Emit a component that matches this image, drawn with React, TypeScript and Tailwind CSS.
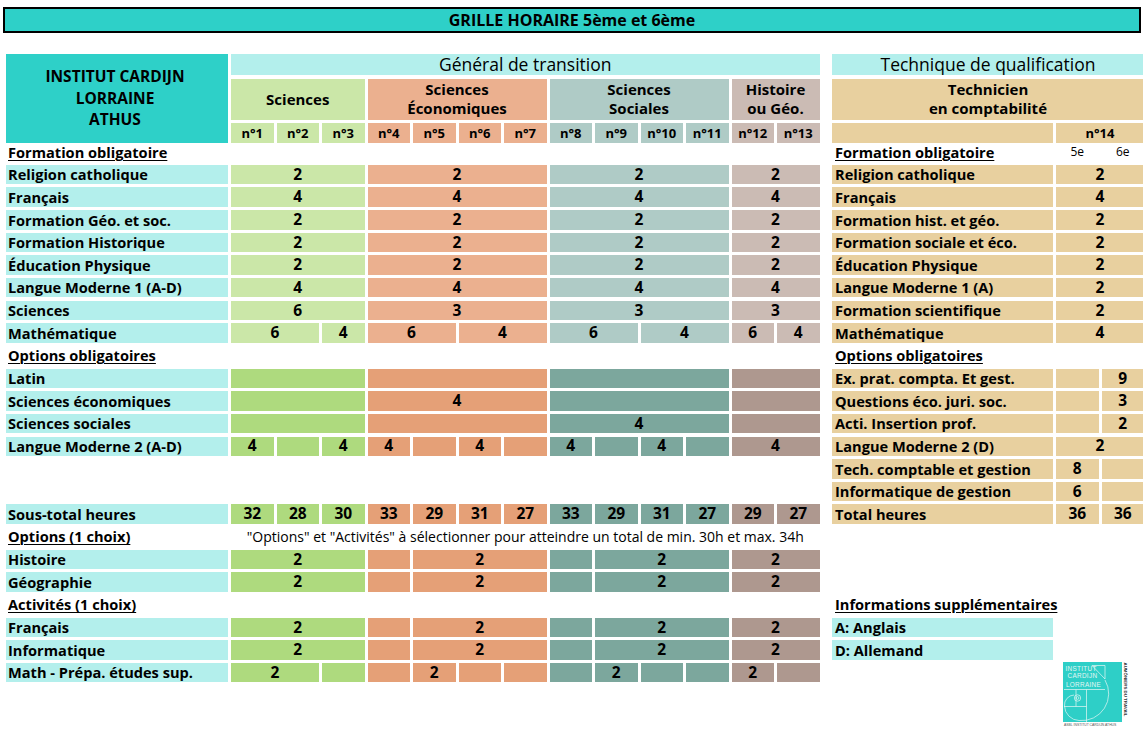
import React from "react";

const GRID =
  "grid grid-cols-[222px_repeat(13,42.5px)_6.5px_221px_repeat(2,42.5px)] gap-x-[3px]";

const SPAN: Record<number, string> = {
  1: "col-span-1",
  2: "col-span-2",
  3: "col-span-3",
  4: "col-span-4",
};

const gL = "bg-[#cbe7a8]";
const pL = "bg-[#ebb08f]";
const tL = "bg-[#afcbc6]";
const mL = "bg-[#cbbbb4]";
const gD = "bg-[#aeda7e]";
const pD = "bg-[#e5a077]";
const tD = "bg-[#7ca79d]";
const mD = "bg-[#ae988f]";
const TAN = "bg-[#e8d09f]";
const CYAN = "bg-[#b3efec]";

type Seg = [number, string];
type Group = { c: string; segs: Seg[] };
const G = (c: string, ...segs: Seg[]): Group => ({ c, segs });

const same = (v: string, deep = false): Group[] => [
  G(deep ? gD : gL, [3, v]),
  G(deep ? pD : pL, [4, v]),
  G(deep ? tD : tL, [4, v]),
  G(deep ? mD : mL, [2, v]),
];

const optPattern = (): Group[] => [
  G(gD, [3, "2"]),
  G(pD, [1, ""], [3, "2"]),
  G(tD, [1, ""], [3, "2"]),
  G(mD, [2, "2"]),
];

type RowDef = {
  label?: string;
  kind?: "cyan" | "section";
  groups?: Group[];
  note?: string;
  rlabel?: string;
  rkind?: "tan" | "section" | "cyan";
  rcells?: Seg[];
  logo?: boolean;
};

const rows: RowDef[] = [
  { label: "Religion catholique", groups: same("2"), rlabel: "Religion catholique", rcells: [[2, "2"]] },
  { label: "Français", groups: same("4"), rlabel: "Français", rcells: [[2, "4"]] },
  { label: "Formation Géo. et soc.", groups: same("2"), rlabel: "Formation hist. et géo.", rcells: [[2, "2"]] },
  { label: "Formation Historique", groups: same("2"), rlabel: "Formation sociale et éco.", rcells: [[2, "2"]] },
  { label: "Éducation Physique", groups: same("2"), rlabel: "Éducation Physique", rcells: [[2, "2"]] },
  { label: "Langue Moderne 1 (A-D)", groups: same("4"), rlabel: "Langue Moderne 1 (A)", rcells: [[2, "2"]] },
  {
    label: "Sciences",
    groups: [G(gL, [3, "6"]), G(pL, [4, "3"]), G(tL, [4, "3"]), G(mL, [2, "3"])],
    rlabel: "Formation scientifique",
    rcells: [[2, "2"]],
  },
  {
    label: "Mathématique",
    groups: [
      G(gL, [2, "6"], [1, "4"]),
      G(pL, [2, "6"], [2, "4"]),
      G(tL, [2, "6"], [2, "4"]),
      G(mL, [1, "6"], [1, "4"]),
    ],
    rlabel: "Mathématique",
    rcells: [[2, "4"]],
  },
  { label: "Options obligatoires", kind: "section", rlabel: "Options obligatoires", rkind: "section" },
  {
    label: "Latin",
    groups: same("", true),
    rlabel: "Ex. prat. compta. Et gest.",
    rcells: [
      [1, ""],
      [1, "9"],
    ],
  },
  {
    label: "Sciences économiques",
    groups: [G(gD, [3, ""]), G(pD, [4, "4"]), G(tD, [4, ""]), G(mD, [2, ""])],
    rlabel: "Questions éco. juri. soc.",
    rcells: [
      [1, ""],
      [1, "3"],
    ],
  },
  {
    label: "Sciences sociales",
    groups: [G(gD, [3, ""]), G(pD, [4, ""]), G(tD, [4, "4"]), G(mD, [2, ""])],
    rlabel: "Acti. Insertion prof.",
    rcells: [
      [1, ""],
      [1, "2"],
    ],
  },
  {
    label: "Langue Moderne 2 (A-D)",
    groups: [
      G(gD, [1, "4"], [1, ""], [1, "4"]),
      G(pD, [1, "4"], [1, ""], [1, "4"], [1, ""]),
      G(tD, [1, "4"], [1, ""], [1, "4"], [1, ""]),
      G(mD, [2, "4"]),
    ],
    rlabel: "Langue Moderne 2 (D)",
    rcells: [[2, "2"]],
  },
  {
    rlabel: "Tech. comptable et gestion",
    rcells: [
      [1, "8"],
      [1, ""],
    ],
  },
  {
    rlabel: "Informatique de gestion",
    rcells: [
      [1, "6"],
      [1, ""],
    ],
  },
  {
    label: "Sous-total heures",
    groups: [
      G(gD, [1, "32"], [1, "28"], [1, "30"]),
      G(pD, [1, "33"], [1, "29"], [1, "31"], [1, "27"]),
      G(tD, [1, "33"], [1, "29"], [1, "31"], [1, "27"]),
      G(mD, [1, "29"], [1, "27"]),
    ],
    rlabel: "Total heures",
    rcells: [
      [1, "36"],
      [1, "36"],
    ],
  },
  {
    label: "Options (1 choix)",
    kind: "section",
    note: "\"Options\" et \"Activités\" à sélectionner pour atteindre un total de min. 30h et max. 34h",
  },
  { label: "Histoire", groups: optPattern() },
  { label: "Géographie", groups: optPattern() },
  {
    label: "Activités (1 choix)",
    kind: "section",
    rlabel: "Informations supplémentaires",
    rkind: "section",
  },
  { label: "Français", groups: optPattern(), rlabel: "A: Anglais", rkind: "cyan" },
  { label: "Informatique", groups: optPattern(), rlabel: "D: Allemand", rkind: "cyan" },
  {
    label: "Math - Prépa. études sup.",
    groups: [
      G(gD, [2, "2"], [1, ""]),
      G(pD, [1, ""], [1, "2"], [1, ""], [1, ""]),
      G(tD, [1, ""], [1, "2"], [1, ""], [1, ""]),
      G(mD, [1, "2"], [1, ""]),
    ],
    logo: true,
  },
];

function Logo() {
  return (
    <svg width="66" height="65" viewBox="0 0 66 65" fontWeight="normal">
      <rect x="0" y="0" width="59" height="60" fill="#2ecfc7" />
      <g fill="none" stroke="#e6f7f5" strokeWidth="0.7">
        <path d="M29 3.5 H42 V17 Z" />
        <path d="M42 18 A 27 27 0 0 1 16 58.5" />
        <path d="M16 58.5 A 15 15 0 0 1 1.5 44" />
        <path d="M1.5 44 A 10 10 0 0 1 11 33" />
        <line x1="1" y1="27.5" x2="42" y2="27.5" />
        <line x1="23.5" y1="27.5" x2="23.5" y2="60" />
        <line x1="1" y1="44.5" x2="23.5" y2="44.5" />
        <line x1="13" y1="27.5" x2="13" y2="44.5" />
        <circle cx="14.5" cy="36" r="3.2" />
        <circle cx="14.5" cy="36" r="1.4" />
      </g>
      <g
        fontFamily="'Liberation Sans', Arial, sans-serif"
        fill="#e3f6f4"
        fontSize="6.4"
        fontWeight="normal"
        letterSpacing="0.3"
      >
        <text x="2.5" y="8.5">INSTITUT</text>
        <text x="4.5" y="16">CARDIJN</text>
        <text x="3" y="24.5">LORRAINE</text>
      </g>
      <text
        transform="translate(61,0.5) rotate(90)"
        fontFamily="'Liberation Sans', Arial, sans-serif"
        fontSize="4.4"
        fontWeight="bold"
        fill="#333"
      >
        AUMÔNIERS DU TRAVAIL
      </text>
      <text
        x="1"
        y="64"
        fontFamily="'Liberation Sans', Arial, sans-serif"
        fontSize="3.4"
        fontWeight="normal"
        fill="#555"
      >
        ASBL INSTITUT CARDIJN ATHUS
      </text>
    </svg>
  );
}

function Row({ r }: { r: RowDef }) {
  const labelCls =
    r.kind === "section"
      ? "col-start-1 pl-[2px] flex items-center whitespace-nowrap text-[14.6px] underline decoration-1 underline-offset-[2px]"
      : r.label
      ? `col-start-1 pl-[2px] flex items-center whitespace-nowrap text-[14.6px] ${CYAN}`
      : "col-start-1";
  const rlabelCls =
    r.rkind === "section"
      ? "col-start-16 pl-[3px] flex items-center whitespace-nowrap text-[14.6px] underline decoration-1 underline-offset-[2px]"
      : r.rkind === "cyan"
      ? `col-start-16 pl-[3px] flex items-center whitespace-nowrap text-[14.6px] ${CYAN}`
      : `col-start-16 pl-[3px] flex items-center whitespace-nowrap text-[14.6px] ${TAN}`;
  return (
    <div className={`${GRID} h-[19.4px] grid-rows-[19.4px]`}>
      <div className={labelCls}>{r.label ?? ""}</div>
      {r.groups &&
        r.groups.flatMap((g, gi) =>
          g.segs.map(([s, t], i) => (
            <div
              key={`${gi}-${i}`}
              className={`${SPAN[s]} ${g.c} flex items-center justify-center text-[15.5px]`}
            >
              {t}
            </div>
          ))
        )}
      {r.note && (
        <div className="col-start-2 col-span-13 flex items-center justify-center font-normal text-[14px] whitespace-nowrap">
          {r.note}
        </div>
      )}
      {r.rlabel && <div className={rlabelCls}>{r.rlabel}</div>}
      {r.rcells &&
        r.rcells.map(([s, t], i) => (
          <div key={i} className={`${SPAN[s]} ${TAN} flex items-center justify-center text-[15.5px]`}>
            {t}
          </div>
        ))}
      {r.logo && (
        <div className="col-start-17 col-span-2 self-start mt-[-1px] ml-[7px] h-[19.4px] overflow-visible">
          <Logo />
        </div>
      )}
    </div>
  );
}

export default function App() {
  return (
    <div className="w-[1143px] h-[732px] bg-white text-black font-['Open_Sans',sans-serif] font-bold text-[15px] leading-none overflow-hidden pt-[7px]">
      <div className="ml-[3px] w-[1138px] h-[26px] border-2 border-black bg-[#2ed0c8] flex items-center justify-center text-[16px]">
        GRILLE HORAIRE 5ème et 6ème
      </div>

      <div className="pl-[6px] mt-[21px]">
        {/* header */}
        <div className={`${GRID} grid-rows-[21px_41px_20px] gap-y-[3.6px]`}>
          <div className="col-start-1 row-start-1 row-span-3 bg-[#2ed0c8] flex flex-col items-center justify-center text-[15.5px] leading-[21.5px] pr-[4px]">
            <div>INSTITUT CARDIJN</div>
            <div>LORRAINE</div>
            <div>ATHUS</div>
          </div>
          <div className={`col-start-2 col-span-13 row-start-1 ${CYAN} flex items-center justify-center font-normal text-[17.5px]`}>
            Général de transition
          </div>
          <div className={`col-start-16 col-span-3 row-start-1 ${CYAN} flex items-center justify-center font-normal text-[17.5px]`}>
            Technique de qualification
          </div>

          <div className={`col-start-2 col-span-3 row-start-2 ${gL} flex items-center justify-center`}>
            Sciences
          </div>
          <div className={`col-span-4 row-start-2 ${pL} flex flex-col items-center justify-center leading-[19px]`}>
            <div>Sciences</div>
            <div>Économiques</div>
          </div>
          <div className={`col-span-4 row-start-2 ${tL} flex flex-col items-center justify-center leading-[19px]`}>
            <div>Sciences</div>
            <div>Sociales</div>
          </div>
          <div className={`col-span-2 row-start-2 ${mL} flex flex-col items-center justify-center leading-[19px]`}>
            <div>Histoire</div>
            <div>ou Géo.</div>
          </div>
          <div className={`col-start-16 col-span-3 row-start-2 ${TAN} flex flex-col items-center justify-center leading-[19px]`}>
            <div>Technicien</div>
            <div>en comptabilité</div>
          </div>

          {[
            [gL, "n°1"],
            [gL, "n°2"],
            [gL, "n°3"],
            [pL, "n°4"],
            [pL, "n°5"],
            [pL, "n°6"],
            [pL, "n°7"],
            [tL, "n°8"],
            [tL, "n°9"],
            [tL, "n°10"],
            [tL, "n°11"],
            [mL, "n°12"],
            [mL, "n°13"],
          ].map(([c, t], i) => (
            <div key={t} className={`${i === 0 ? "col-start-2" : ""} row-start-3 ${c} flex items-center justify-center text-[13px]`}>
              {t}
            </div>
          ))}
          <div className={`col-start-16 row-start-3 ${TAN}`} />
          <div className={`col-span-2 row-start-3 ${TAN} flex items-center justify-center text-[13px]`}>n°14</div>
        </div>

        {/* body */}
        <div className="flex flex-col gap-[3.25px]">
          <div className={`${GRID} h-[18.4px]`}>
            <div className="col-start-1 pl-[2px] flex items-center whitespace-nowrap text-[14.6px] underline decoration-1 underline-offset-[2px]">
              Formation obligatoire
            </div>
            <div className="col-start-16 pl-[3px] flex items-center whitespace-nowrap text-[14.6px] underline decoration-1 underline-offset-[2px]">
              Formation obligatoire
            </div>
            <div className="flex items-center justify-center font-normal text-[12px]">5e</div>
            <div className="flex items-center justify-center font-normal text-[12px]">6e</div>
          </div>
          {rows.map((r, i) => (
            <Row key={i} r={r} />
          ))}
        </div>
      </div>
    </div>
  );
}
